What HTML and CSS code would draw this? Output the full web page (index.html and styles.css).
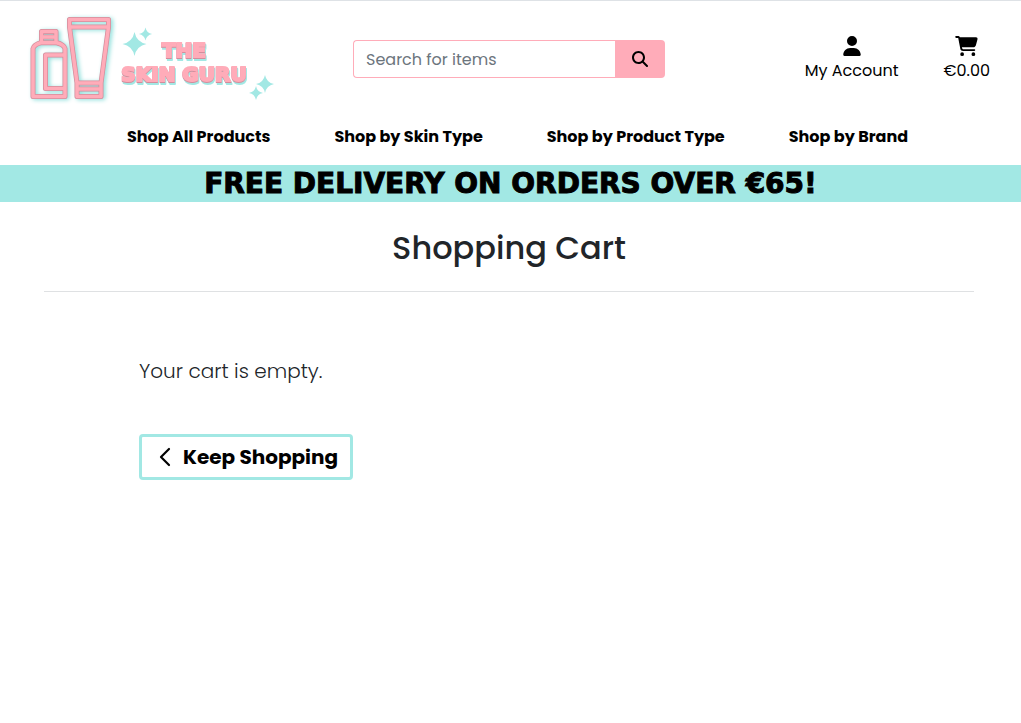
FILE: index.html
```html
<!DOCTYPE html>
<html lang="en">
<head>
<meta charset="utf-8">
<meta name="viewport" content="width=device-width, initial-scale=1">
<title>The Skin Guru</title>
<link rel="stylesheet" href="styles.css">
</head>
<body>
<header class="site-header">
  <div class="header-row">
    <a class="logo" href="#" aria-label="The Skin Guru home">
      <svg class="logo-art" viewBox="20 9 260 100" width="260" height="100">
        <defs>
          <g id="bottles" fill="none" stroke-linejoin="round">
            <path d="M33 96.5V48.500Q34 44.500 41.500 42.500V31.500H56V42.500Q64 44.500 65 48.500V96.500ZM41.500 37H56M41.500 42.800H56M65 55H45.500V88.500H65"/>
            <path d="M69.500 19.500H108.500V27L101 83V96.500H77V83L69.500 27ZM69.500 27H108.500M77 83H101M77 89H101"/>
          </g>
          <path id="spark" d="M0-12Q2-2 12 0Q2 2 0 12Q-2 2-12 0Q-2-2 0-12Z"/>
        </defs>
        <g class="logo-glow">
          <use href="#bottles" class="logo-edge"/>
          <use href="#bottles" class="logo-core"/>
        </g>
        <g class="logo-spark">
          <use href="#spark" transform="translate(134.500 44)"/>
          <use href="#spark" transform="translate(145.500 34) scale(.55)"/>
          <use href="#spark" transform="translate(265 84) scale(.75)"/>
          <use href="#spark" transform="translate(256 93) scale(.58)"/>
        </g>
        <g class="logo-words">
          <text x="184" y="57" text-anchor="middle">THE</text>
          <text x="184" y="81" text-anchor="middle">SKIN GURU</text>
        </g>
      </svg>
    </a>
    <form class="search">
      <input class="search-input" type="text" placeholder="Search for items" aria-label="Search for items">
      <button class="search-button" type="button" aria-label="Search">
        <svg viewBox="0 0 512 512" width="16" height="16"><path d="M416 208c0 45.900-14.900 88.300-40 122.700L502.600 457.400c12.500 12.500 12.500 32.800 0 45.300s-32.800 12.500-45.300 0L330.700 376c-34.400 25.200-76.800 40-122.700 40C93.100 416 0 322.900 0 208S93.100 0 208 0S416 93.100 416 208zM208 352a144 144 0 1 0 0-288 144 144 0 1 0 0 288z"/></svg>
      </button>
    </form>
    <div class="shortcuts">
      <a class="shortcut" href="#">
        <svg viewBox="0 0 448 512" width="18" height="20"><path d="M224 256A128 128 0 1 0 224 0a128 128 0 1 0 0 256zm-45.700 48C79.800 304 0 383.800 0 482.300C0 498.700 13.300 512 29.700 512H418.300c16.400 0 29.700-13.300 29.700-29.700C448 383.800 368.200 304 269.700 304H178.300z"/></svg>
        <span>My Account</span>
      </a>
      <a class="shortcut" href="#">
        <svg viewBox="0 0 576 512" width="23" height="20"><path d="M0 24C0 10.700 10.700 0 24 0H69.500c22 0 41.500 12.800 50.600 32h411c26.300 0 45.500 25 38.600 50.400l-41 152.300c-8.500 31.400-37 53.300-69.500 53.300H170.700l5.400 28.500c2.200 11.300 12.100 19.500 23.600 19.500H488c13.300 0 24 10.700 24 24s-10.700 24-24 24H199.700c-34.600 0-64.300-24.600-70.700-58.500L77.400 54.500c-.7-3.800-4-6.500-7.900-6.500H24C10.700 48 0 37.300 0 24zM128 464a48 48 0 1 1 96 0 48 48 0 1 1 -96 0zm336-48a48 48 0 1 1 0 96 48 48 0 1 1 0-96z"/></svg>
        <span>€0.00</span>
      </a>
    </div>
  </div>
  <nav class="main-nav">
    <a href="#">Shop All Products</a>
    <a href="#">Shop by Skin Type</a>
    <a href="#">Shop by Product Type</a>
    <a href="#">Shop by Brand</a>
  </nav>
</header>
<div class="banner">FREE DELIVERY ON ORDERS OVER €65!</div>
<main class="cart">
  <h1 class="cart-title">Shopping Cart</h1>
  <div class="cart-body">
    <p class="cart-message">Your cart is empty.</p>
    <a class="keep-shopping" href="#">
      <svg viewBox="0 0 12 20" width="12" height="20"><path d="M10 2L2 10L10 18" fill="none" stroke="currentColor" stroke-width="2.200" stroke-linecap="round" stroke-linejoin="round"/></svg>
      <span>Keep Shopping</span>
    </a>
  </div>
</main>
</body>
</html>
```
FILE: styles.css
```css
* { box-sizing: border-box; }
body {
  margin: 0;
  border-top: 1px solid #dee2e6;
  background: #fff;
  color: #212529;
  font: 16px/24px Poppins, Inter, sans-serif;
}
a { color: #000; text-decoration: none; }
svg { display: block; }

.header-row {
  display: grid;
  grid-template-columns: minmax(260px, 333fr) 312px minmax(200px, 325fr);
  align-items: center;
  padding: 8px 31px 0 20px;
}
.logo { justify-self: start; }
.logo-glow { filter: drop-shadow(2px 1px 2px #8fe0dc); }
.logo-edge { stroke: #d58c9b; stroke-width: 5; }
.logo-core { stroke: #ffacb9; stroke-width: 3.5; }
.logo-spark { fill: #a2e8e4; }
.logo-words {
  font: 900 20px/1 "DejaVu Sans", sans-serif;
  fill: #ffacb9;
  stroke: #ffacb9;
  stroke-width: 2px;
  filter: drop-shadow(0 1px 0 #d58c9b) drop-shadow(1px 2px 0 #a2e8e4);
}

.search { display: flex; height: 38px; }
.search-input {
  flex: 1;
  min-width: 0;
  padding: 7px 12px 5px;
  border: 1px solid #ffacb9;
  border-right: 0;
  border-radius: 4px 0 0 4px;
  background: #fff;
  color: #212529;
  font: inherit;
}
.search-input::placeholder { color: #6c757d; opacity: 1; }
.search-button {
  display: grid;
  place-items: center;
  width: 50px;
  padding: 0;
  border: 0;
  border-radius: 0 4px 4px 0;
  background: #ffacb9;
}
.shortcuts { display: flex; justify-content: flex-end; gap: 45px; }
.shortcut { display: flex; flex-direction: column; align-items: center; gap: 3px; }

.main-nav {
  display: flex;
  flex-wrap: wrap;
  justify-content: center;
  gap: 0 64px;
  padding: 16px 0 16px 14px;
  font-weight: 700;
}
.banner {
  padding: 4px 0 3px;
  background: #a2e8e4;
  color: #000;
  font: 900 28px/30px "DejaVu Sans", sans-serif;
  text-align: center;
  -webkit-text-stroke: 1px #000;
}

.cart { padding: 26px 47px 0 44px; }
.cart-title {
  margin: 0;
  padding-bottom: 23px;
  border-bottom: 1px solid #dfe1e3;
  font-size: 32px;
  line-height: 40px;
  font-weight: 500;
  text-align: center;
}
.cart-body { padding: 64px 95px 0; }
.cart-message { margin: 0 0 48px; font-size: 20px; line-height: 30px; font-weight: 300; }
.keep-shopping {
  display: inline-flex;
  align-items: center;
  gap: 12px;
  padding: 5px 12px 5px 17px;
  border: 3px solid #a2e8e4;
  border-radius: 4px;
  font-size: 20px;
  line-height: 30px;
  font-weight: 700;
}
```
